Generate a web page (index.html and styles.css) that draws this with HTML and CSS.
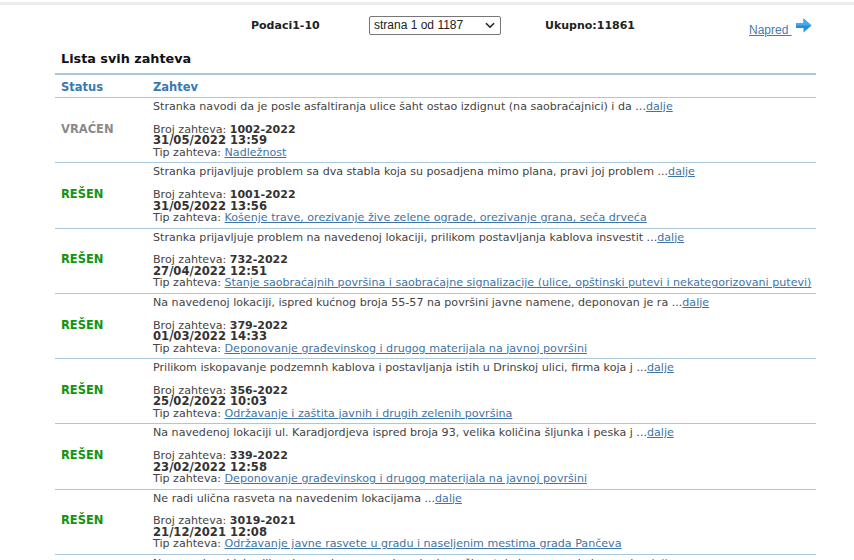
FILE: index.html
```html
<!DOCTYPE html>
<html lang="sr">
<head>
<meta charset="utf-8">
<title>Lista svih zahteva</title>
<link rel="stylesheet" href="styles.css">
</head>
<body>
<div class="topline"></div>
<div class="pager">
  <span class="pager-info">Podaci1-10</span>
  <div class="select">
    <span>strana 1 od 1187</span>
    <svg class="chev" width="10" height="7" viewBox="0 0 10 7"><path d="M1 1.2 L5 5.2 L9 1.2" fill="none" stroke="#222" stroke-width="1.6"/></svg>
  </div>
  <span class="pager-total">Ukupno:11861</span>
  <a class="next" href="#">Napred&nbsp;<svg class="arrow" width="17" height="15" viewBox="0 0 17 15"><path d="M1 5 H8.5 V0.5 L16.5 7.5 L8.5 14.5 V10 H1 Z" fill="#1b8fe3"/><path d="M1 5 H8.5 V0.5 L16.5 7.5 L9 7.5 H1 Z" fill="#45a9f0"/></svg></a>
</div>
<div class="wrap">
  <h2 class="title">Lista svih zahteva</h2>
  <table class="list">
    <thead>
      <tr><th class="c-status">Status</th><th>Zahtev</th></tr>
    </thead>
    <tbody>
      <tr>
        <td class="c-status st-back">VRAĆEN</td>
        <td><div>Stranka navodi da je posle asfaltiranja ulice šaht ostao izdignut (na saobraćajnici) i da ...<a href="#">dalje</a></div>
          <div class="blank"></div>
          <div>Broj zahteva: <b>1002-2022</b></div>
          <div class="date"><b>31/05/2022 13:59</b></div>
          <div>Tip zahteva: <a href="#">Nadležnost</a></div></td>
      </tr>
      <tr>
        <td class="c-status st-ok">REŠEN</td>
        <td><div>Stranka prijavljuje problem sa dva stabla koja su posadjena mimo plana, pravi joj problem ...<a href="#">dalje</a></div>
          <div class="blank"></div>
          <div>Broj zahteva: <b>1001-2022</b></div>
          <div class="date"><b>31/05/2022 13:56</b></div>
          <div>Tip zahteva: <a href="#">Košenje trave, orezivanje žive zelene ograde, orezivanje grana, seča drveća</a></div></td>
      </tr>
      <tr>
        <td class="c-status st-ok">REŠEN</td>
        <td><div>Stranka prijavljuje problem na navedenoj lokaciji, prilikom postavljanja kablova insvestit ...<a href="#">dalje</a></div>
          <div class="blank"></div>
          <div>Broj zahteva: <b>732-2022</b></div>
          <div class="date"><b>27/04/2022 12:51</b></div>
          <div>Tip zahteva: <a href="#">Stanje saobraćajnih površina i saobraćajne signalizacije (ulice, opštinski putevi i nekategorizovani putevi)</a></div></td>
      </tr>
      <tr>
        <td class="c-status st-ok">REŠEN</td>
        <td><div>Na navedenoj lokaciji, ispred kućnog broja 55-57 na površini javne namene, deponovan je ra ...<a href="#">dalje</a></div>
          <div class="blank"></div>
          <div>Broj zahteva: <b>379-2022</b></div>
          <div class="date"><b>01/03/2022 14:33</b></div>
          <div>Tip zahteva: <a href="#">Deponovanje građevinskog i drugog materijala na javnoj površini</a></div></td>
      </tr>
      <tr>
        <td class="c-status st-ok">REŠEN</td>
        <td><div>Prilikom iskopavanje podzemnh kablova i postavljanja istih u Drinskoj ulici, firma koja j ...<a href="#">dalje</a></div>
          <div class="blank"></div>
          <div>Broj zahteva: <b>356-2022</b></div>
          <div class="date"><b>25/02/2022 10:03</b></div>
          <div>Tip zahteva: <a href="#">Održavanje i zaštita javnih i drugih zelenih površina</a></div></td>
      </tr>
      <tr>
        <td class="c-status st-ok">REŠEN</td>
        <td><div>Na navedenoj lokaciji ul. Karadjordjeva ispred broja 93, velika količina šljunka i peska j ...<a href="#">dalje</a></div>
          <div class="blank"></div>
          <div>Broj zahteva: <b>339-2022</b></div>
          <div class="date"><b>23/02/2022 12:58</b></div>
          <div>Tip zahteva: <a href="#">Deponovanje građevinskog i drugog materijala na javnoj površini</a></div></td>
      </tr>
      <tr>
        <td class="c-status st-ok">REŠEN</td>
        <td><div>Ne radi ulična rasveta na navedenim lokacijama ...<a href="#">dalje</a></div>
          <div class="blank"></div>
          <div>Broj zahteva: <b>3019-2021</b></div>
          <div class="date"><b>21/12/2021 12:08</b></div>
          <div>Tip zahteva: <a href="#">Održavanje javne rasvete u gradu i naseljenim mestima grada Pančeva</a></div></td>
      </tr>
      <tr>
        <td class="c-status st-ok">REŠEN</td>
        <td><div>Na navedenoj lokaciji, nakon radova na vodovodnoj mreži, ostala je rupa na kolovozu i ...<a href="#">dalje</a></div>
          <div class="blank"></div>
          <div>Broj zahteva: <b>3001-2021</b></div>
          <div class="date"><b>20/12/2021 09:41</b></div>
          <div>Tip zahteva: <a href="#">Nadležnost</a></div></td>
      </tr>
    </tbody>
  </table>
</div>
</body>
</html>
```

FILE: styles.css
```css
html, body {
  margin: 0;
  padding: 0;
  background: #fff;
}
body {
  font-family: "DejaVu Sans", Verdana, sans-serif;
  font-size: 11px;
  color: #444;
  height: 560px;
  overflow: hidden;
}
.topline {
  height: 3px;
  margin-top: 2px;
  background: #ececec;
}
.pager {
  display: flex;
  align-items: center;
  height: 30px;
  margin-top: 5px;
  padding-left: 251px;
}
.pager-info, .pager-total {
  font-weight: bold;
  color: #222;
}
.pager-info { width: 118px; }
.select {
  box-sizing: border-box;
  width: 132px;
  height: 19px;
  border: 1px solid #777;
  border-radius: 2px;
  display: flex;
  align-items: center;
  justify-content: space-between;
  padding: 0 5px 0 4px;
  color: #222;
  font-family: "Liberation Sans", Arial, sans-serif;
  font-size: 12px;
  margin-right: 44px;
}
.pager-total { width: 204px; }
.next {
  display: flex;
  align-items: flex-end;
  color: #4a7aa8;
  text-decoration: underline;
  font-size: 12px;
  font-family: "Liberation Sans", Arial, sans-serif;
  margin-top: 5px;
}
.arrow {
  margin-left: 3px;
  margin-bottom: 4px;
}
.wrap {
  margin: 0 38px 0 55px;
}
.title {
  margin: 11px 0 0 0;
  padding: 0 6px 6px;
  font-size: 12.8px;
  font-weight: bold;
  color: #111;
  line-height: 16px;
  border-bottom: 2px solid #a9c8de;
}
.list {
  width: 100%;
  border-collapse: collapse;
}
.list th {
  text-align: left;
  color: #3a78b0;
  font-weight: bold;
  font-size: 11.5px;
  padding: 6px 0 3px 6px;
  line-height: 13px;
  border-bottom: 1px solid #a9c8de;
}
.list th.c-status { width: 86px; }
.list td {
  padding: 3px 0 4px 6px;
  line-height: 11.45px;
  vertical-align: top;
  border-bottom: 1px solid #a9c8de;
  font-size: 11.1px;
}
.list td.c-status {
  vertical-align: middle;
  font-weight: bold;
  font-size: 11.5px;
}
.st-ok { color: #129312; }
.st-back { color: #8a8a8a; }
.blank { height: 11.45px; }
.list b { color: #333; font-size: 11px; }
.list .date b { font-size: 11.6px; }
.list a { color: #3f74a6; }
```
